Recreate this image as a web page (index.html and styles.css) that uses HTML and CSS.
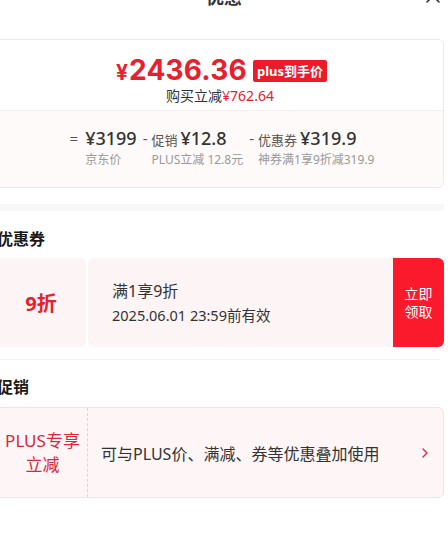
FILE: index.html
```html
<!DOCTYPE html>
<html lang="zh-CN">
<head>
<meta charset="utf-8">
<link rel="stylesheet" href="styles.css">
</head>
<body>
<div class="sheet">
  <header class="header">
    <div class="title">优惠</div>
    <svg class="close" width="16" height="16" viewBox="0 0 16 16"><path d="M2 2 L14 14 M14 2 L2 14" stroke="#333" stroke-width="1.6" fill="none" stroke-linecap="round"/></svg>
  </header>

  <section class="price-card">
    <div class="price-top">
      <div class="price-line">
        <span class="yen">¥</span><span class="amount">2436.36</span><span class="badge">plus到手价</span>
      </div>
      <div class="save">购买立减<span class="red">¥762.64</span></div>
    </div>
    <div class="price-bottom">
      <div class="calc">
        <div class="col">
          <span class="op">=</span>
          <div class="col-body">
            <div class="col-main"><span class="val">¥3199</span></div>
            <div class="col-desc">京东价</div>
          </div>
        </div>
        <div class="col">
          <span class="op">-</span>
          <div class="col-body">
            <div class="col-main"><span class="lbl">促销</span><span class="val">¥12.8</span></div>
            <div class="col-desc">PLUS立减 12.8元</div>
          </div>
        </div>
        <div class="col">
          <span class="op">-</span>
          <div class="col-body">
            <div class="col-main"><span class="lbl">优惠券</span><span class="val">¥319.9</span></div>
            <div class="col-desc">神券满1享9折减319.9</div>
          </div>
        </div>
      </div>
    </div>
  </section>

  <div class="band"></div>

  <h2 class="sec-title">优惠券</h2>
  <div class="coupon">
    <div class="coupon-left">9折</div>
    <div class="coupon-mid">
      <div class="coupon-name">满1享9折</div>
      <div class="coupon-date">2025.06.01 23:59前有效</div>
    </div>
    <div class="coupon-btn">立即<br>领取</div>
  </div>

  <div class="divider"></div>

  <h2 class="sec-title promo-title">促销</h2>
  <div class="promo">
    <div class="promo-left">PLUS专享<br>立减</div>
    <div class="promo-text">可与PLUS价、满减、券等优惠叠加使用</div>
    <svg class="chev" width="8" height="12" viewBox="0 0 8 12"><path d="M2 2 L6 6 L2 10" stroke="#e0283a" stroke-width="1.4" fill="none" stroke-linecap="round" stroke-linejoin="round"/></svg>
  </div>
</div>
</body>
</html>
```

FILE: styles.css
```css
html, body {
  margin: 0;
  padding: 0;
  background: #fff;
  overflow: hidden;
}
body {
  font-family: "Noto Sans", "Noto Sans CJK SC", sans-serif;
  color: #1a1a1a;
}
.sheet {
  width: 448px;
  margin-left: -4px;
}
.header {
  position: relative;
  height: 40px;
  margin-top: -23px;
  display: flex;
  align-items: center;
  justify-content: center;
}
.title {
  font-size: 18px;
  font-weight: 700;
  color: #333;
  line-height: 40px;
  margin-left: 8px;
}
.close {
  position: absolute;
  right: 3px;
  top: 11px;
}
.price-card {
  margin-top: 22px;
  border: 1px solid #f1e6e8;
  border-radius: 6px;
  overflow: hidden;
}
.price-top {
  background: #fff;
  padding: 13px 0 5px;
  display: flex;
  flex-direction: column;
  align-items: center;
  border-bottom: 1px solid #f6eeef;
}
.price-line {
  display: flex;
  align-items: center;
  height: 34px;
  color: #e8202e;
  font-family: Inter, "Noto Sans", sans-serif;
  font-weight: 700;
  margin-left: 3px;
}
.yen {
  font-size: 21px;
  margin-right: 1px;
  margin-top: 4px;
}
.amount {
  font-size: 28px;
  letter-spacing: 0.2px;
}
.badge {
  margin-left: 6px;
  background: #eb1b2c;
  color: #fff;
  font-family: "Noto Sans", "Noto Sans CJK SC", sans-serif;
  font-size: 13px;
  font-weight: 700;
  line-height: 22px;
  height: 22px;
  padding: 0 4px;
  border-radius: 2px;
  margin-top: 2px;
}
.save {
  font-size: 14px;
  line-height: 18px;
  color: #333;
}
.red { color: #e8202e; }
.price-bottom {
  background: #fffafa;
  padding: 15px 0 17px;
}
.calc {
  display: flex;
  justify-content: center;
  gap: 6px;
  margin-left: 4px;
}
.col {
  display: flex;
  align-items: flex-start;
}
.op {
  font-size: 15px;
  line-height: 24px;
  color: #555;
  margin-right: 4px;
}
.col:first-child .op { margin-right: 7px; }
.col-body {
  display: flex;
  flex-direction: column;
}
.col-main {
  display: flex;
  align-items: baseline;
  line-height: 24px;
  height: 24px;
}
.lbl {
  font-size: 13px;
  color: #555;
  margin-right: 3px;
}
.val {
  font-size: 18px;
  font-weight: 500;
  color: #333;
}
.col-desc {
  font-size: 12px;
  line-height: 20px;
  color: #999;
  white-space: nowrap;
}
.band {
  margin-top: 16px;
  height: 7px;
  background: #f8f8fa;
}
.sec-title {
  margin: 16px 0 7px 1px;
  font-size: 16px;
  font-weight: 700;
  line-height: 24px;
  color: #1a1a1a;
}
.coupon {
  display: flex;
  height: 89px;
  gap: 2px;
}
.coupon-left {
  width: 90px;
  background: #fdf4f5;
  border-radius: 6px;
  display: flex;
  align-items: center;
  justify-content: center;
  color: #e8202e;
  font-size: 20px;
  font-weight: 700;
}
.coupon-mid {
  flex: 1;
  background: #fdf4f5;
  border-radius: 6px 0 0 6px;
  padding-left: 24px;
  display: flex;
  flex-direction: column;
  justify-content: center;
  color: #333;
}
.coupon-name {
  font-size: 16px;
  line-height: 24px;
}
.coupon-date {
  font-size: 14.5px;
  line-height: 24px;
}
.coupon-btn {
  width: 51px;
  background: #fa1a2c;
  color: #fff;
  border-radius: 0 6px 6px 0;
  font-size: 14px;
  line-height: 18px;
  display: flex;
  align-items: center;
  justify-content: center;
  text-align: center;
  margin-left: -2px;
}
.divider {
  margin-top: 12px;
  height: 1px;
  background: #f2f2f2;
  margin-right: 4px;
}
.promo-title {
  margin-top: 15px;
  margin-bottom: 8px;
}
.promo {
  position: relative;
  display: flex;
  align-items: center;
  height: 89px;
  background: #fdf5f6;
  border: 1px solid #f3e1e4;
  border-radius: 6px;
}
.promo-left {
  width: 90px;
  height: 100%;
  border-right: 1px dashed #e8cfd3;
  display: flex;
  align-items: center;
  justify-content: center;
  text-align: center;
  color: #d7283c;
  font-size: 17px;
  line-height: 24px;
  margin-left: 1px;
  box-sizing: border-box;
}
.promo-text {
  flex: 1;
  padding-left: 13px;
  font-size: 16px;
  color: #333;
}
.chev {
  margin-right: 14px;
}
```
